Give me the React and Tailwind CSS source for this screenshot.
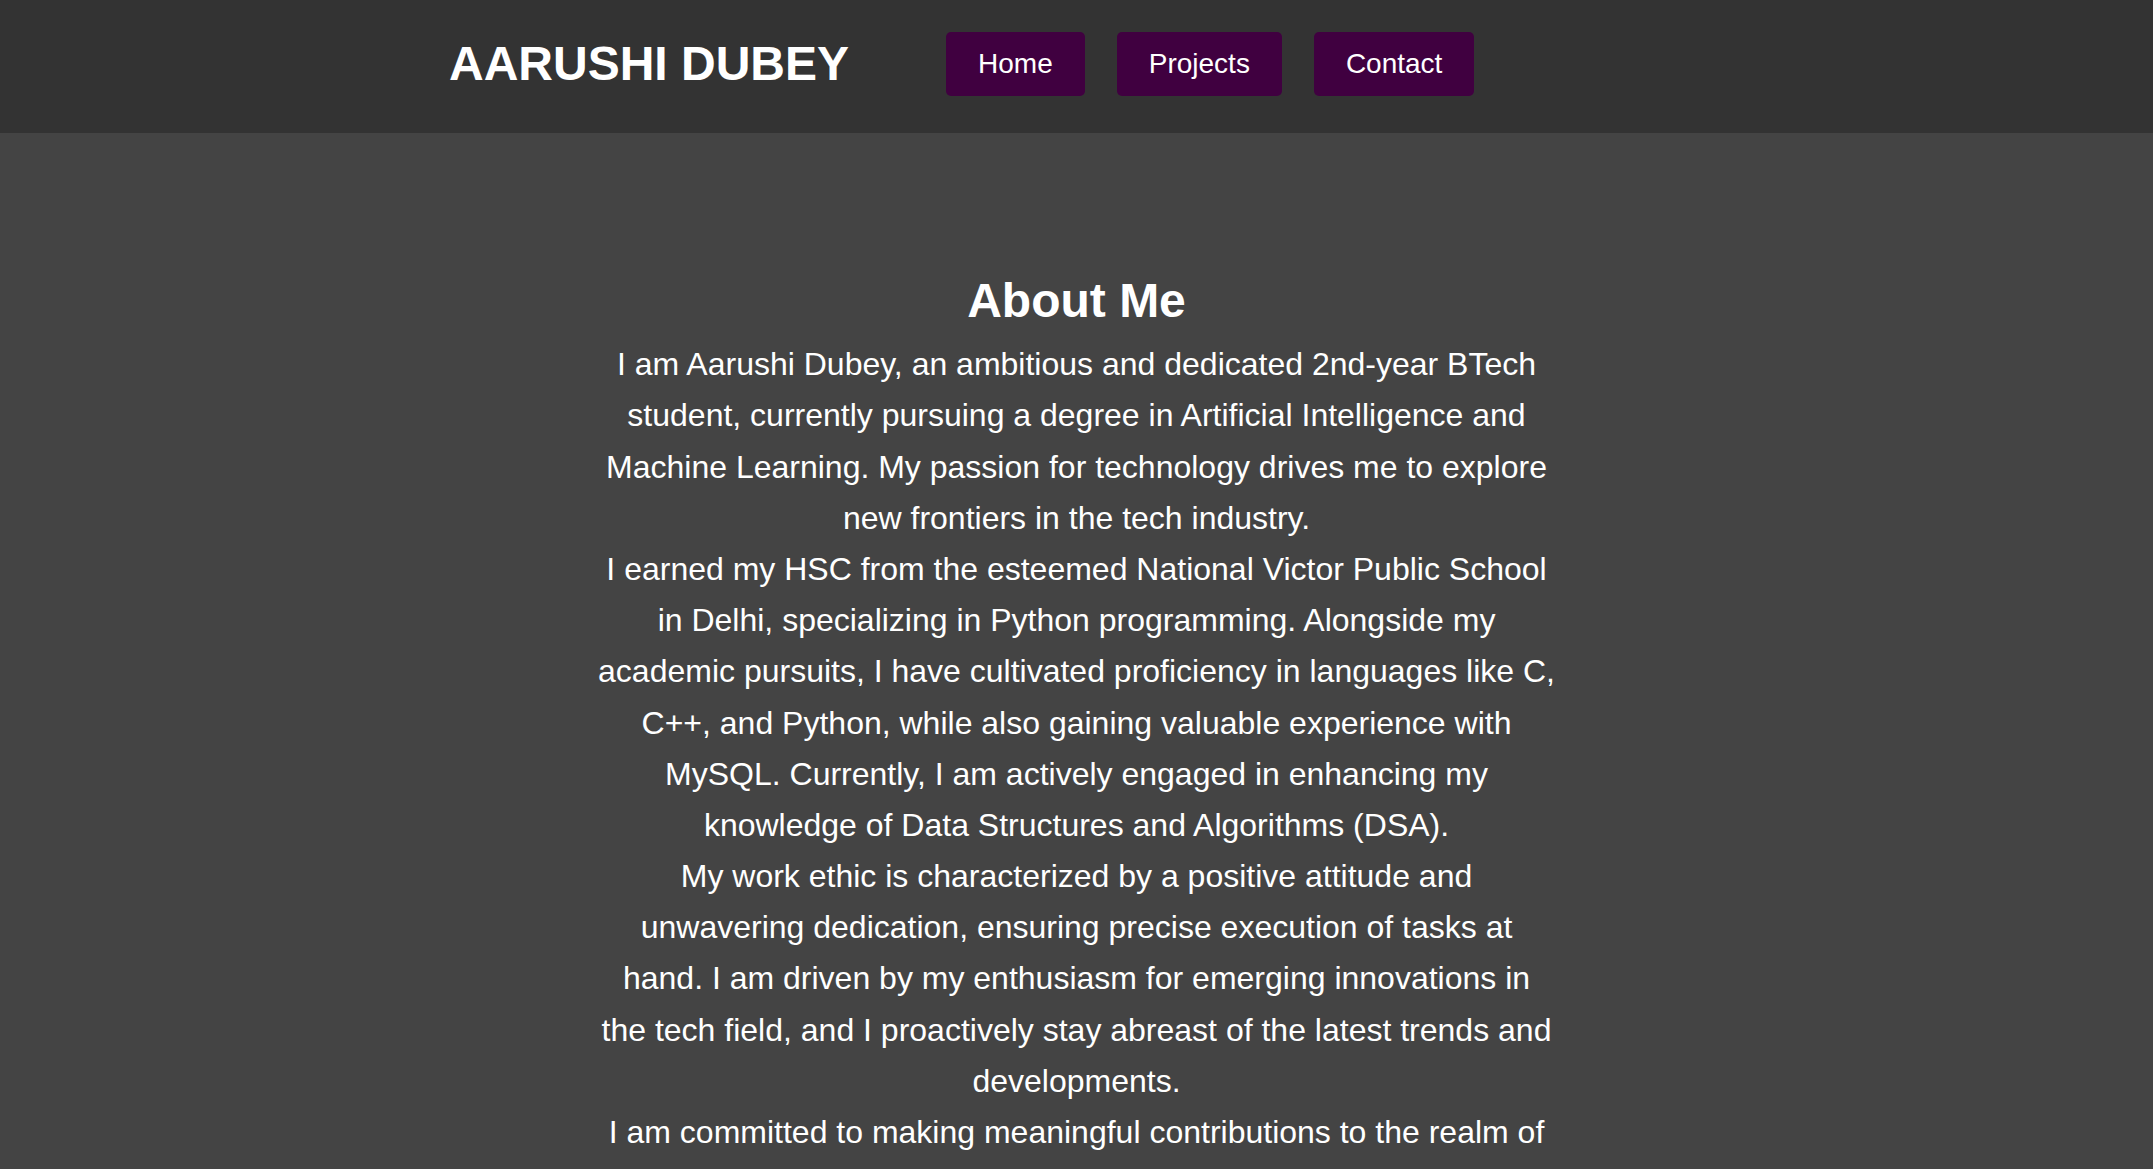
const links = ['Home', 'Projects', 'Contact']

export default function App() {
  return (
    <div className="min-h-screen bg-[#444444] text-white font-['Liberation_Sans',Arial,sans-serif]">
      <header className="h-[133px] bg-[#333333] flex items-center pl-[449px] pb-[6px]">
        <h1 className="text-[48px] font-bold leading-none">AARUSHI DUBEY</h1>
        <nav className="flex gap-[32px] ml-[97px]">
          {links.map(link => (
            <a
              key={link}
              href="#"
              className="bg-[#400040] rounded-[5px] px-[32px] py-[16px] text-[28px] leading-[32px]"
            >
              {link}
            </a>
          ))}
        </nav>
      </header>

      <main className="pt-[140px] pb-16">
        <section className="max-w-[960px] mx-auto text-center">
          <h2 className="text-[48px] font-bold leading-[1.15] mb-[11px]">About Me</h2>
          <p className="text-[32px] leading-[1.6]">
            I am Aarushi Dubey, an ambitious and dedicated 2nd-year BTech student, currently pursuing a
            degree in Artificial Intelligence and Machine Learning. My passion for technology drives me
            to explore new frontiers in the tech industry.
          </p>
          <p className="text-[32px] leading-[1.6]">
            I earned my HSC from the esteemed National Victor Public School in Delhi, specializing in
            Python programming. Alongside my academic pursuits, I have cultivated proficiency in
            languages like C, C++, and Python, while also gaining valuable experience with MySQL.
            Currently, I am actively engaged in enhancing my knowledge of Data Structures and
            Algorithms (DSA).
          </p>
          <p className="text-[32px] leading-[1.6]">
            My work ethic is characterized by a positive attitude and unwavering dedication, ensuring
            precise execution of tasks at hand. I am driven by my enthusiasm for emerging innovations
            in the tech field, and I proactively stay abreast of the latest trends and developments.
          </p>
          <p className="text-[32px] leading-[1.6]">
            I am committed to making meaningful contributions to the realm of technology, and I look
            forward to collaborating on projects that challenge me and help me grow.
          </p>
        </section>
      </main>
    </div>
  )
}
